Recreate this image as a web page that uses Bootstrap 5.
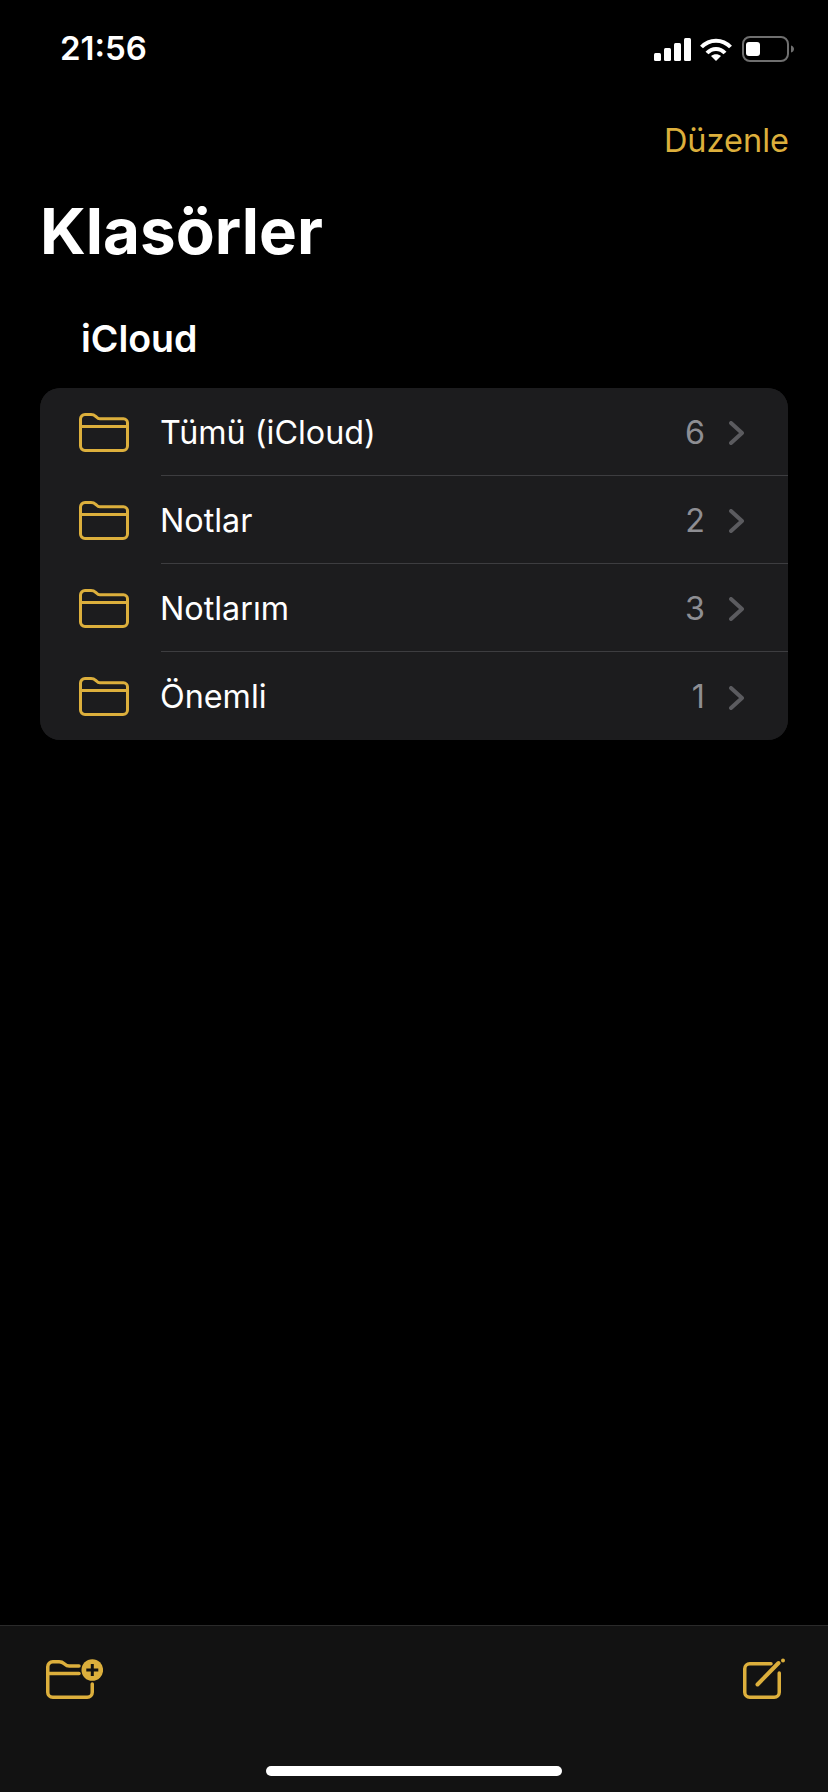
<!DOCTYPE html>
<html lang="tr">

<head>
    <meta charset="UTF-8">
    <meta name="viewport" content="width=device-width, initial-scale=1.0">
    <title>Klasörler</title>
    <link href="https://cdn.jsdelivr.net/npm/bootstrap@5.3.0/dist/css/bootstrap.min.css" rel="stylesheet">
    <style>
        body {
            background: #000;
            color: #fff;
            font-family: Inter, "Liberation Sans", sans-serif;
        }

        .ekran {
            height: 1792px;
        }

        .durum-cubugu {
            height: 88px;
            padding: 28px 33px 0 60px;
        }

        .saat {
            font-size: 33px;
            line-height: 40px;
            font-weight: 600;
        }

        .sinyal-ikon { width: 37px; height: 23px; }
        .wifi-ikon { width: 32px; height: 23px; margin-left: 9px; }
        .pil-ikon { width: 53px; height: 26px; margin-left: 10px; }

        .ust-eylem {
            color: #dcaf3c;
            font-size: 32.5px;
            line-height: 40px;
            padding: 33px 39px 0 0;
        }

        .baslik {
            font-size: 63.7px;
            line-height: 80px;
            font-weight: 700;
            padding: 30px 0 0 40px;
            margin: 0;
        }

        .bolum-baslik {
            font-size: 37.5px;
            line-height: 48px;
            font-weight: 600;
            padding: 44px 0 0 81px;
            margin: 0 0 25px;
        }

        .klasor-listesi {
            margin: 0 40px;
            background: #1c1c1e;
            border-radius: 20px;
            overflow: hidden;
        }

        .klasor-satir {
            height: 88px;
            background: #1c1c1e;
            border: 0;
            color: #fff;
            padding: 0;
        }

        .klasor-ikon {
            width: 50px;
            height: 39px;
            margin: 0 32px 0 39px;
            flex: none;
        }

        .satir-icerik {
            height: 100%;
            font-size: 32.3px;
            padding: 3px 44px 0 0;
            border-bottom: 1px solid #3d3d40;
        }

        .satir-ad {
            margin-left: -1px;
        }

        .klasor-satir:last-child .satir-icerik {
            border-bottom: 0;
        }

        .adet {
            color: #8e8e93;
            margin-right: 24px;
        }

        .ok-ikon {
            width: 15px;
            height: 24px;
        }

        .alt-cubuk {
            height: 167px;
            background: #121212;
            border-top: 1px solid #2a2a2a;
            padding-top: 32px;
        }

        .alt-eylemler {
            padding: 0 38px 0 46px;
        }

        .ikon-yeni { width: 57px; height: 50px; }
        .ikon-yaz { width: 47px; height: 50px; }

        .ev-cizgi {
            width: 296px;
            height: 10px;
            background: #fff;
            border-radius: 5px;
            margin-bottom: 16px;
        }
    </style>
</head>

<body>
    <div class="ekran d-flex flex-column">
        <div class="durum-cubugu d-flex justify-content-between align-items-start">
            <span class="saat">21:56</span>
            <div class="d-flex align-items-center pt-2">
                <svg class="sinyal-ikon" viewBox="0 0 37 23" fill="#fff">
                    <rect x="0" y="15" width="7" height="8" rx="1.500" />
                    <rect x="10" y="10" width="7" height="13" rx="1.500" />
                    <rect x="20" y="5" width="7" height="18" rx="1.500" />
                    <rect x="30" y="0" width="7" height="23" rx="1.500" />
                </svg>
                <svg class="wifi-ikon" viewBox="0 0 32 23" fill="none" stroke="#fff" stroke-width="4">
                    <path d="M1.500 9C9.500 .5 22.500 .5 30.500 9" />
                    <path d="M7 15C12 9.500 20 9.500 25 15" />
                    <path d="M16 23l-5-5c3-2.500 7-2.500 10 0z" fill="#fff" stroke="none" />
                </svg>
                <svg class="pil-ikon" viewBox="0 0 53 26">
                    <rect x="1" y="1" width="45" height="24" rx="7" fill="none" stroke="#6f6f6f" stroke-width="2" />
                    <rect x="4" y="6" width="14" height="14" rx="3" fill="#fff" />
                    <path d="M49 9.500c2 .5 3 2 3 3.500s-1 3-3 3.500z" fill="#6f6f6f" />
                </svg>
            </div>
        </div>

        <div class="ust-eylem text-end">Düzenle</div>
        <h1 class="baslik">Klasörler</h1>
        <h2 class="bolum-baslik">iCloud</h2>

        <!-- Klasor listesi -->
        <div class="list-group klasor-listesi">
            <div class="list-group-item klasor-satir d-flex align-items-center">
                <svg class="klasor-ikon" viewBox="0 0 50 39" fill="none" stroke="#dcaf3c" stroke-width="3" stroke-linejoin="round">
                    <path d="M1.500 33V6A4.500 4.500 0 0 1 6 1.500h6c2.500 0 3.500.7 4.700 1.800 1.200 1.100 2 2.500 4 2.500H44.500a4 4 0 0 1 4 4V33a4.500 4.500 0 0 1-4.500 4.500H6A4.500 4.500 0 0 1 1.500 33z" />
                    <path d="M1.500 13.500h47" />
                </svg>
                <div class="satir-icerik flex-grow-1 d-flex align-items-center">
                    <span class="satir-ad flex-grow-1">Tümü (iCloud)</span>
                    <span class="adet">6</span>
                    <svg class="ok-ikon" viewBox="0 0 15 24" fill="none" stroke="#5b5b5f" stroke-width="4" stroke-linecap="round" stroke-linejoin="round">
                        <path d="M2 2l11 10L2 22" />
                    </svg>
                </div>
            </div>
            <div class="list-group-item klasor-satir d-flex align-items-center">
                <svg class="klasor-ikon" viewBox="0 0 50 39" fill="none" stroke="#dcaf3c" stroke-width="3" stroke-linejoin="round">
                    <path d="M1.500 33V6A4.500 4.500 0 0 1 6 1.500h6c2.500 0 3.500.7 4.700 1.800 1.200 1.100 2 2.500 4 2.500H44.500a4 4 0 0 1 4 4V33a4.500 4.500 0 0 1-4.500 4.500H6A4.500 4.500 0 0 1 1.500 33z" />
                    <path d="M1.500 13.500h47" />
                </svg>
                <div class="satir-icerik flex-grow-1 d-flex align-items-center">
                    <span class="satir-ad flex-grow-1">Notlar</span>
                    <span class="adet">2</span>
                    <svg class="ok-ikon" viewBox="0 0 15 24" fill="none" stroke="#5b5b5f" stroke-width="4" stroke-linecap="round" stroke-linejoin="round">
                        <path d="M2 2l11 10L2 22" />
                    </svg>
                </div>
            </div>
            <div class="list-group-item klasor-satir d-flex align-items-center">
                <svg class="klasor-ikon" viewBox="0 0 50 39" fill="none" stroke="#dcaf3c" stroke-width="3" stroke-linejoin="round">
                    <path d="M1.500 33V6A4.500 4.500 0 0 1 6 1.500h6c2.500 0 3.500.7 4.700 1.800 1.200 1.100 2 2.500 4 2.500H44.500a4 4 0 0 1 4 4V33a4.500 4.500 0 0 1-4.500 4.500H6A4.500 4.500 0 0 1 1.500 33z" />
                    <path d="M1.500 13.500h47" />
                </svg>
                <div class="satir-icerik flex-grow-1 d-flex align-items-center">
                    <span class="satir-ad flex-grow-1">Notlarım</span>
                    <span class="adet">3</span>
                    <svg class="ok-ikon" viewBox="0 0 15 24" fill="none" stroke="#5b5b5f" stroke-width="4" stroke-linecap="round" stroke-linejoin="round">
                        <path d="M2 2l11 10L2 22" />
                    </svg>
                </div>
            </div>
            <div class="list-group-item klasor-satir d-flex align-items-center">
                <svg class="klasor-ikon" viewBox="0 0 50 39" fill="none" stroke="#dcaf3c" stroke-width="3" stroke-linejoin="round">
                    <path d="M1.500 33V6A4.500 4.500 0 0 1 6 1.500h6c2.500 0 3.500.7 4.700 1.800 1.200 1.100 2 2.500 4 2.500H44.500a4 4 0 0 1 4 4V33a4.500 4.500 0 0 1-4.500 4.500H6A4.500 4.500 0 0 1 1.500 33z" />
                    <path d="M1.500 13.500h47" />
                </svg>
                <div class="satir-icerik flex-grow-1 d-flex align-items-center">
                    <span class="satir-ad flex-grow-1">Önemli</span>
                    <span class="adet">1</span>
                    <svg class="ok-ikon" viewBox="0 0 15 24" fill="none" stroke="#5b5b5f" stroke-width="4" stroke-linecap="round" stroke-linejoin="round">
                        <path d="M2 2l11 10L2 22" />
                    </svg>
                </div>
            </div>
        </div>

        <div class="flex-grow-1"></div>

        <!-- Alt cubuk -->
        <div class="alt-cubuk d-flex flex-column">
            <div class="alt-eylemler d-flex justify-content-between align-items-start flex-grow-1">
                <svg class="ikon-yeni" viewBox="0 0 57 50" fill="none" stroke="#dcaf3c" stroke-width="3.500" stroke-linecap="round" stroke-linejoin="round">
                    <path d="M46.250 26v8.250a5 5 0 0 1-5 5H6.750a5 5 0 0 1-5-5V8.750a5 5 0 0 1 5-5h6.500c2.500 0 3.500.7 5 2 1.500 1.300 2.500 2.300 5 2.300H33" />
                    <path d="M1.750 15.500H33" />
                    <circle cx="46.300" cy="12" r="10.800" fill="#dcaf3c" stroke="none" />
                    <path d="M46.300 6v12M40.300 12h12" stroke="#121212" stroke-width="3" stroke-linecap="butt" />
                </svg>
                <svg class="ikon-yaz" viewBox="0 0 47 50" fill="none" stroke="#dcaf3c" stroke-width="3.500" stroke-linecap="round" stroke-linejoin="round">
                    <path d="M28 5.750H6.750a5 5 0 0 0-5 5v23.500a5 5 0 0 0 5 5h24.500a5 5 0 0 0 5-5V15" />
                    <path d="M14.500 26.500 35.500 5" stroke-width="4" />
                    <circle cx="40" cy="2.500" r="2" fill="#dcaf3c" stroke="none" />
                </svg>
            </div>
            <div class="ev-cizgi align-self-center"></div>
        </div>
    </div>

    <script src="https://cdn.jsdelivr.net/npm/bootstrap@5.3.0/dist/js/bootstrap.bundle.min.js"></script>
</body>

</html>
